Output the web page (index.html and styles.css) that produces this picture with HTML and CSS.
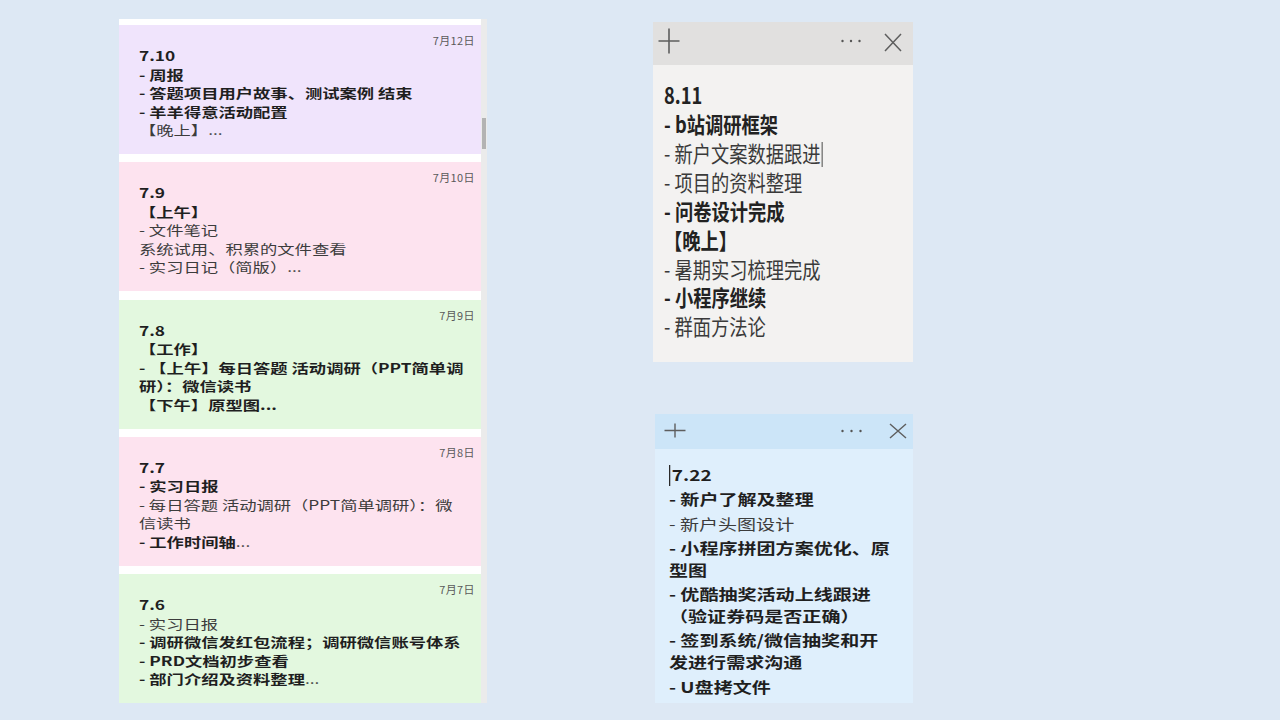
FILE: index.html
```html
<!DOCTYPE html>
<html lang="zh-CN">
<head>
<meta charset="utf-8">
<title>便笺</title>
<link rel="stylesheet" href="styles.css">
</head>
<body>
<div class="stage">
  <div class="list-panel">
    <div class="list">
      <div class="card purple">
        <div class="date">7月12日</div>
        <div class="txt">
          <div class="b">7.10</div>
          <div class="b">- 周报</div>
          <div class="b">- 答题项目用户故事、测试案例 结束</div>
          <div class="b">- 羊羊得意活动配置</div>
          <div class="r">【晚上】...</div>
        </div>
      </div>
      <div class="card pink">
        <div class="date">7月10日</div>
        <div class="txt">
          <div class="b">7.9</div>
          <div class="b">【上午】</div>
          <div class="r">- 文件笔记</div>
          <div class="r">系统试用、积累的文件查看</div>
          <div class="r">- 实习日记（简版）...</div>
        </div>
      </div>
      <div class="card green">
        <div class="date">7月9日</div>
        <div class="txt">
          <div class="b">7.8</div>
          <div class="b">【工作】</div>
          <div class="b">- 【上午】每日答题 活动调研（PPT简单调<br>研）：微信读书</div>
          <div class="b">【下午】原型图...</div>
        </div>
      </div>
      <div class="card pink">
        <div class="date">7月8日</div>
        <div class="txt">
          <div class="b">7.7</div>
          <div class="b">- 实习日报</div>
          <div class="r">- 每日答题 活动调研（PPT简单调研）：微<br>信读书</div>
          <div class="b">- 工作时间轴<span class="r">...</span></div>
        </div>
      </div>
      <div class="card green">
        <div class="date">7月7日</div>
        <div class="txt">
          <div class="b">7.6</div>
          <div class="r">- 实习日报</div>
          <div class="b">- 调研微信发红包流程；调研微信账号体系</div>
          <div class="b">- PRD文档初步查看</div>
          <div class="b">- 部门介绍及资料整理<span class="r">...</span></div>
        </div>
      </div>
    </div>
    <div class="scrollbar"><div class="thumb"></div></div>
  </div>

  <div class="notes">
    <div class="note grey-note">
      <div class="note-head">
        <svg class="ic-plus" width="22" height="26" viewBox="0 0 22 26"><path d="M11 0.5V25.5M0.5 13H21.5" stroke="#5e5e5e" stroke-width="1.6" fill="none"/></svg>
        <span class="spacer"></span>
        <svg class="ic-dots" width="20" height="4" viewBox="0 0 20 4"><circle cx="1.5" cy="2" r="1.2" fill="#555"/><circle cx="10" cy="2" r="1.2" fill="#555"/><circle cx="18.5" cy="2" r="1.2" fill="#555"/></svg>
        <svg class="ic-x" width="18" height="19" viewBox="0 0 18 19"><path d="M1 1L17 18M17 1L1 18" stroke="#5e5e5e" stroke-width="1.5" fill="none"/></svg>
      </div>
      <div class="note-body">
        <div class="ntxt">
          <div class="b">8.11</div>
          <div class="b">- b站调研框架</div>
          <div class="r">- 新户文案数据跟进<span class="caret"></span></div>
          <div class="r">- 项目的资料整理</div>
          <div class="b">- 问卷设计完成</div>
          <div class="b">【晚上】</div>
          <div class="r">- 暑期实习梳理完成</div>
          <div class="b">- 小程序继续</div>
          <div class="r">- 群面方法论</div>
        </div>
      </div>
    </div>

    <div class="note blue-note">
      <div class="note-head">
        <svg class="ic-plus" width="22" height="15" viewBox="0 0 22 15"><path d="M11 0.5V14.5M0.5 7.5H21.5" stroke="#5e5e5e" stroke-width="1.4" fill="none"/></svg>
        <span class="spacer"></span>
        <svg class="ic-dots" width="21" height="4" viewBox="0 0 21 4"><circle cx="1.5" cy="2" r="1.2" fill="#555"/><circle cx="10.5" cy="2" r="1.2" fill="#555"/><circle cx="19.5" cy="2" r="1.2" fill="#555"/></svg>
        <svg class="ic-x" width="18" height="16" viewBox="0 0 18 16"><path d="M1 1L17 15M17 1L1 15" stroke="#5e5e5e" stroke-width="1.4" fill="none"/></svg>
      </div>
      <div class="note-body">
        <div class="ntxt">
          <div class="b p"><span class="caret small"></span>7.22</div>
          <div class="b p">- 新户了解及整理</div>
          <div class="r p">- 新户头图设计</div>
          <div class="b p">- 小程序拼团方案优化、原<br>型图</div>
          <div class="b p">- 优酷抽奖活动上线跟进<br>（验证券码是否正确）</div>
          <div class="b p">- 签到系统/微信抽奖和开<br>发进行需求沟通</div>
          <div class="b p">- U盘拷文件</div>
        </div>
      </div>
    </div>
  </div>
</div>
</body>
</html>
```

FILE: styles.css
```css
* { box-sizing: border-box; }

html, body {
  margin: 0;
  padding: 0;
}

body {
  width: 1280px;
  height: 720px;
  overflow: hidden;
  background: #dde8f4;
  font-family: "Noto Sans CJK SC", "Noto Sans", "Liberation Sans", sans-serif;
  color: #1e1e1e;
}

.stage {
  display: flex;
  align-items: flex-start;
  padding: 19px 0 0 119px;
}

/* ---------- left list ---------- */
.list-panel {
  display: flex;
  height: 684px;
  overflow: hidden;
}

.list {
  width: 362px;
  background: #ffffff;
  padding-top: 6px;
  display: flex;
  flex-direction: column;
  gap: 8.25px;
}

.scrollbar {
  width: 6px;
  background: #ebebeb;
  padding: 99px 1px 0 1px;
}

.thumb {
  width: 4px;
  height: 31px;
  background: #b3b3b3;
}

.card {
  height: 129px;
  flex: none;
  overflow: hidden;
  padding: 9px 6px 0 20px;
}

.card.purple { background: #f0e4fc; }
.card.pink { background: #fde3ef; }
.card.green { background: #e3f8df; }

.date {
  text-align: right;
  font-size: 11px;
  line-height: 13px;
  color: #5a5a5a;
  letter-spacing: 0.4px;
}

.txt {
  transform: scaleX(1.33);
  transform-origin: left top;
  white-space: nowrap;
  font-size: 13px;
  line-height: 18.5px;
}

.b { font-weight: 700; color: #1f1f1f; }
.r { font-weight: 400; color: #3c3c3c; }

/* ---------- sticky notes ---------- */
.notes {
  display: flex;
  flex-direction: column;
  margin-left: 166px;
}

.note {
  display: flex;
  flex-direction: column;
}

.note-head {
  display: flex;
  align-items: center;
}

.spacer { flex: 1; }

.grey-note {
  width: 260px;
  margin-top: 3px;
  background: #f3f2f1;
}

.grey-note .note-head {
  height: 43px;
  background: #e1e0df;
  padding: 0 11px 0 5px;
}

.grey-note .ic-plus { margin-top: -6px; }
.grey-note .ic-x { margin-left: 23px; margin-top: -3px; }
.grey-note .ic-dots { margin-top: -6px; }

.grey-note .note-body {
  height: 297px;
  padding: 15px 0 0 11px;
}

.grey-note .ntxt {
  transform: scaleX(0.83);
  transform-origin: left top;
  white-space: nowrap;
  font-size: 22px;
  line-height: 28.9px;
}

.grey-note .b { color: #222; }
.grey-note .r { color: #3a3a3a; }

.blue-note {
  width: 258px;
  margin-top: 52px;
  margin-left: 2px;
  background: #dfeffc;
}

.blue-note .note-head {
  height: 35px;
  background: #cce5f8;
  padding: 0 6px 0 9px;
}

.blue-note .ic-x { margin-left: 27px; }
.blue-note .ic-plus { margin-top: -2px; }
.blue-note .ic-dots { margin-top: -2px; }
.blue-note .ic-x { margin-top: -2px; }

.blue-note .note-body {
  height: 254px;
  padding: 15px 0 0 14px;
}

.blue-note .ntxt {
  transform: scaleX(1.27);
  transform-origin: left top;
  white-space: nowrap;
  font-size: 15px;
  line-height: 22px;
}

.blue-note .p + .p { margin-top: 2.3px; }

.caret {
  display: inline-block;
  width: 1.5px;
  height: 25px;
  background: #2a2a2a;
  vertical-align: -5px;
  margin-left: 1px;
}

.caret.small {
  height: 21px;
  width: 1.2px;
  margin: 0 1px 0 0;
  vertical-align: -5px;
}
```
